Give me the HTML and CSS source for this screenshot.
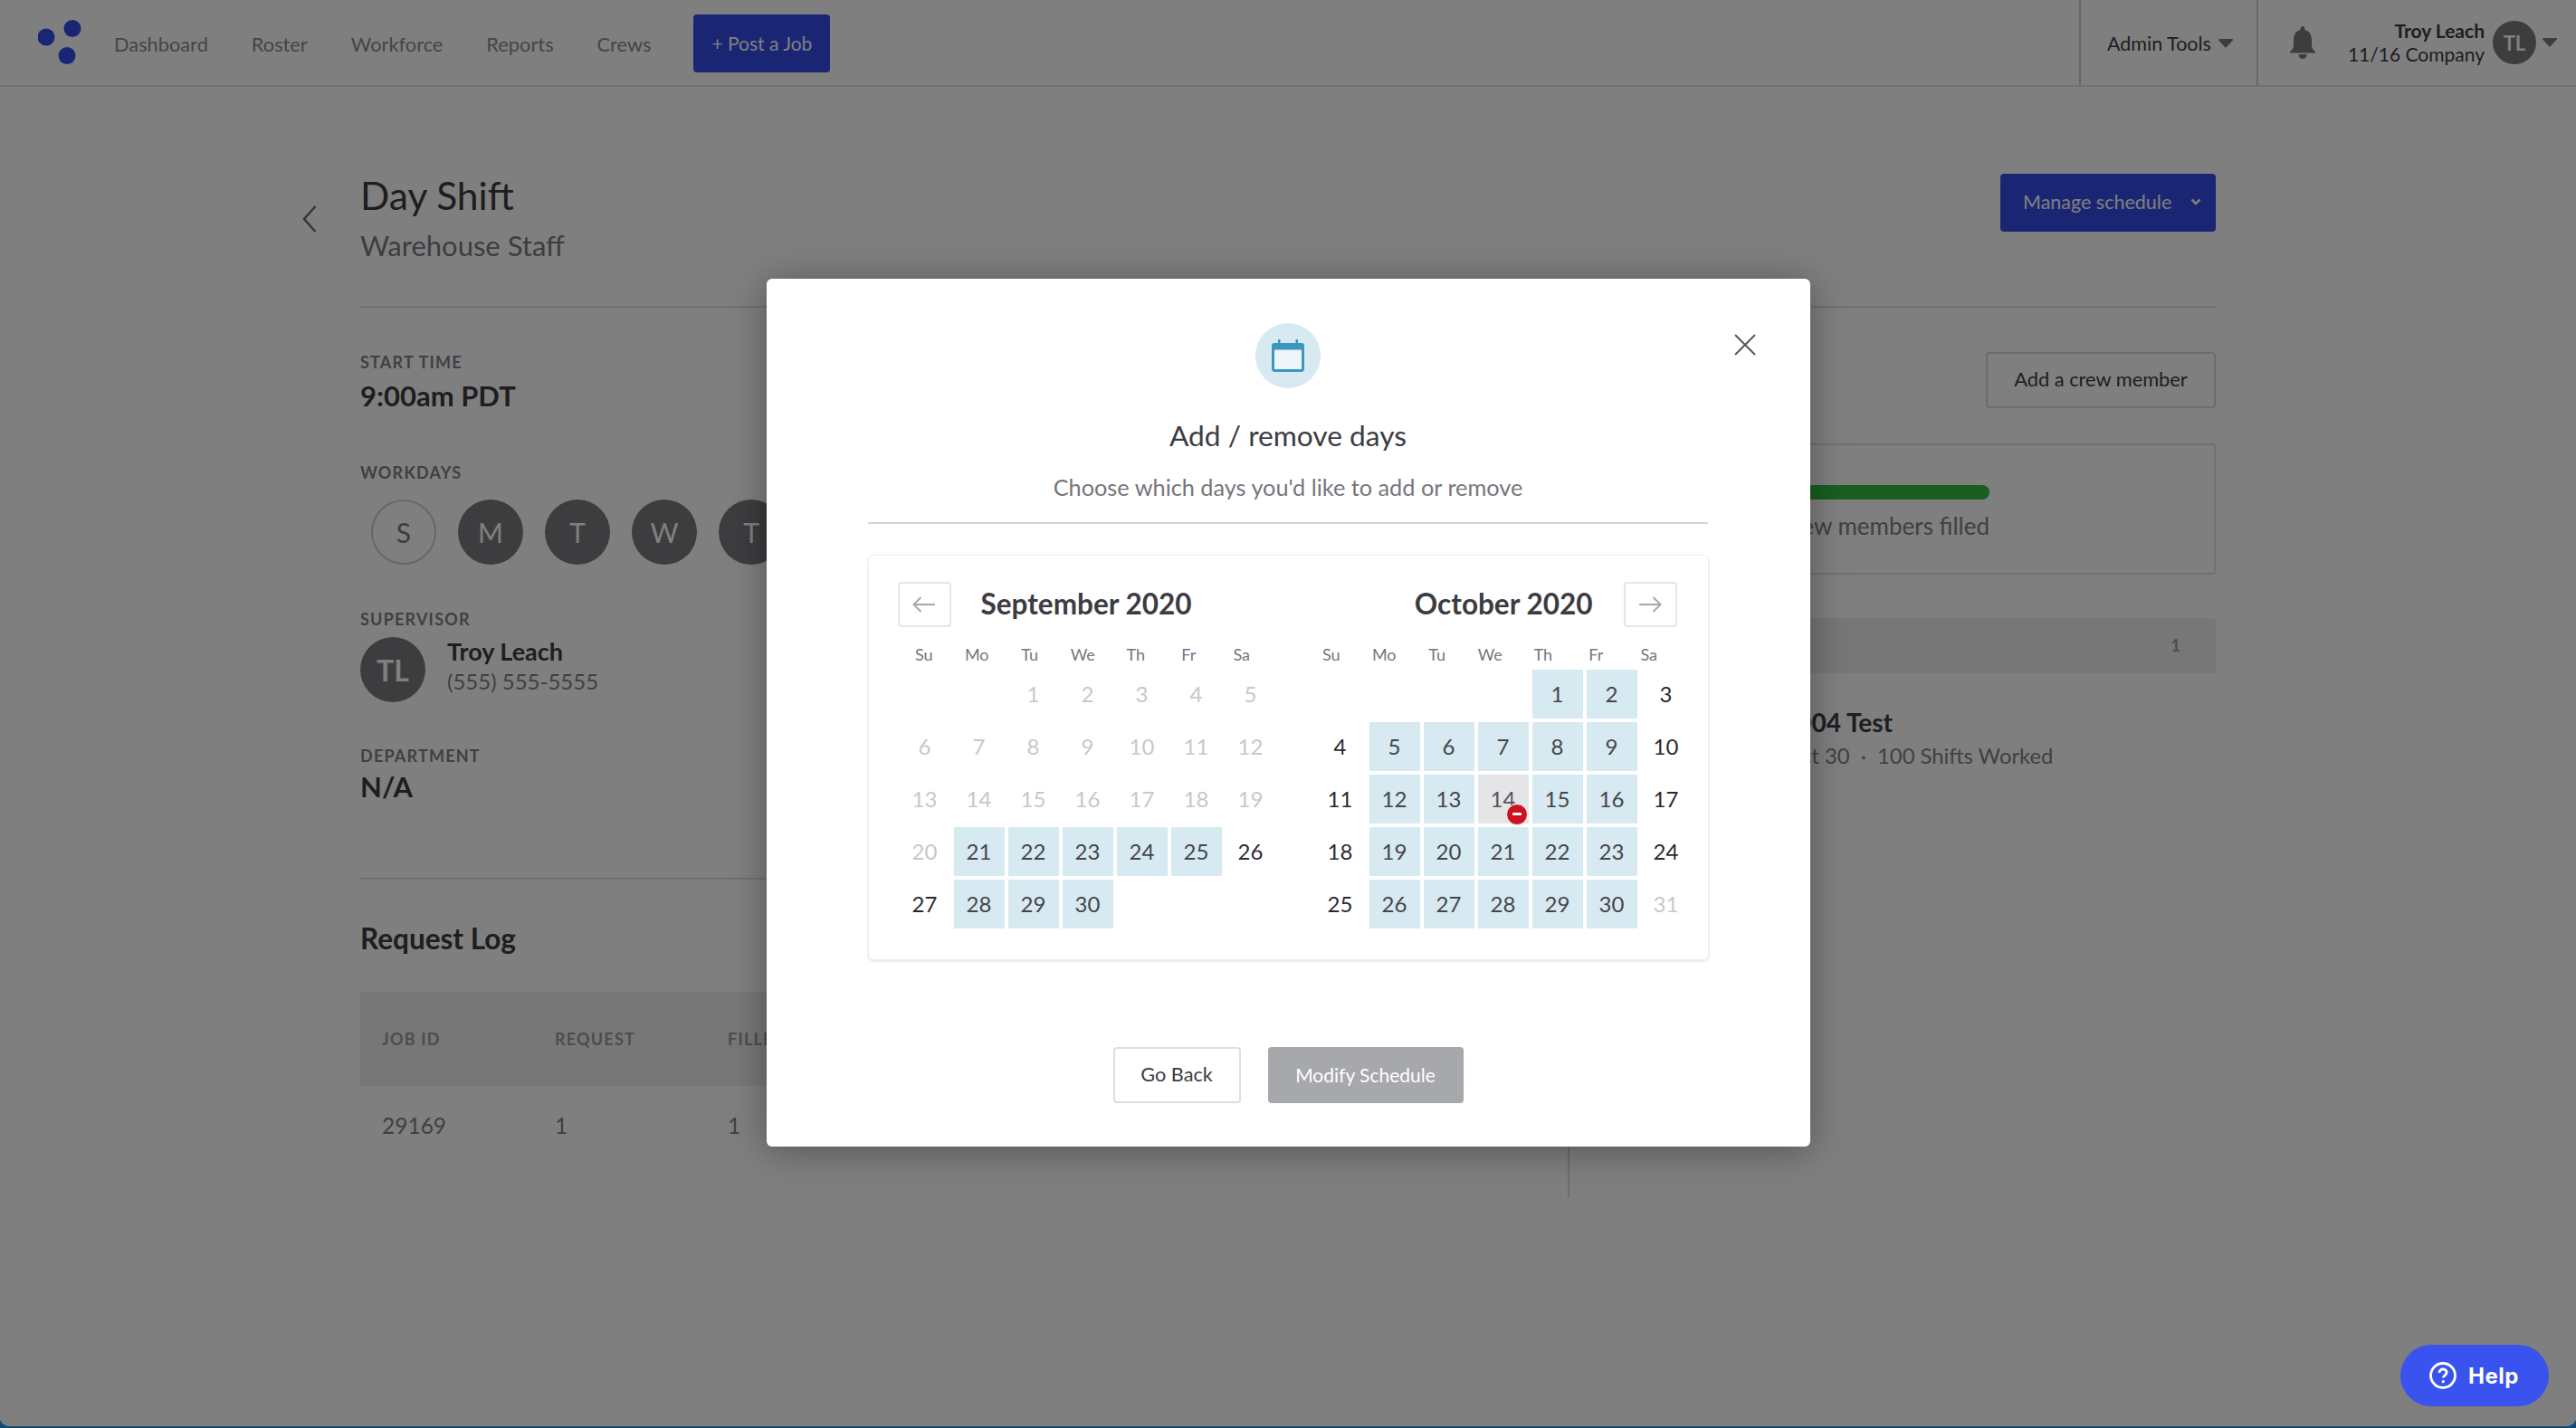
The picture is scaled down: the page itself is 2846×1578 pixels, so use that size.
FILE: index.html
```html
<!DOCTYPE html>
<html lang="en">

<head>
  <meta charset="UTF-8">
  <title>Day Shift</title>
  <link rel="stylesheet" href="styles.css">
</head>

<body>
  <div class="page">

    <header class="topbar">
      <svg class="logo" width="60" height="50" viewBox="0 0 60 50">
        <circle cx="9" cy="19" r="9.5" />
        <circle cx="38" cy="9.5" r="9.5" />
        <circle cx="32" cy="39.5" r="9.5" />
      </svg>
      <nav class="nav">
        <a>Dashboard</a>
        <a>Roster</a>
        <a>Workforce</a>
        <a>Reports</a>
        <a>Crews</a>
      </nav>
      <button class="btn-post">+ Post a Job</button>

      <div class="admin-tools">
        <span>Admin Tools</span>
        <svg class="caret" width="16" height="10" viewBox="0 0 16 10"><path d="M1 0h14a1 1 0 0 1 .7 1.7L8 10 .3 1.7A1 1 0 0 1 1 0z" /></svg>
      </div>

      <div class="account">
        <svg class="bell" width="28" height="36" viewBox="0 0 28 36">
          <path d="M14 0c1.400 0 2.300 1 2.300 2.400v1.500C21.500 5 24 9.400 24 15v6c0 3 1.500 5 4 7v1.500H0V28c2.500-2 4-4 4-7v-6C4 9.400 6.500 5 11.700 3.900V2.400C11.700 1 12.600 0 14 0z" />
          <path d="M9.500 31h9c0 3-2 5-4.500 5s-4.500-2-4.500-5z" />
        </svg>
        <div class="account-text">
          <div class="account-name">Troy Leach</div>
          <div class="account-company">11/16 Company</div>
        </div>
        <div class="avatar avatar-small">TL</div>
        <svg class="caret" width="16" height="10" viewBox="0 0 16 10"><path d="M1 0h14a1 1 0 0 1 .7 1.7L8 10 .3 1.7A1 1 0 0 1 1 0z" /></svg>
      </div>
    </header>

    <main class="main">
      <div class="back">
        <svg width="16" height="30" viewBox="0 0 16 30"><path d="M14.500 1 2 15l12.500 14" /></svg>
      </div>

      <div class="content">
        <div class="title-row">
          <div>
            <h1>Day Shift</h1>
            <div class="subtitle">Warehouse Staff</div>
          </div>
          <button class="btn-manage">
            Manage schedule
            <svg width="12" height="8" viewBox="0 0 12 8"><path d="M1.500 1.500 6 6l4.500-4.500" /></svg>
          </button>
        </div>

        <div class="columns">
          <section class="details">
            <div class="label">START TIME</div>
            <div class="value">9:00am PDT</div>

            <div class="label label-workdays">WORKDAYS</div>
            <div class="workdays">
              <div class="day-dot off">S</div>
              <div class="day-dot">M</div>
              <div class="day-dot">T</div>
              <div class="day-dot">W</div>
              <div class="day-dot">T</div>
            </div>

            <div class="label label-supervisor">SUPERVISOR</div>
            <div class="supervisor">
              <div class="avatar">TL</div>
              <div>
                <div class="supervisor-name">Troy Leach</div>
                <div class="supervisor-phone">(555) 555-5555</div>
              </div>
            </div>

            <div class="label label-department">DEPARTMENT</div>
            <div class="value value-department">N/A</div>

            <hr class="rule">

            <h2>Request Log</h2>
            <div class="log-table log-head">
              <div>JOB ID</div>
              <div>REQUEST</div>
              <div>FILLED</div>
            </div>
            <div class="log-table log-row">
              <div>29169</div>
              <div>1</div>
              <div>1</div>
            </div>
          </section>

          <section class="crew">
            <div class="crew-actions">
              <button class="btn-crew">Add a crew member</button>
            </div>
            <div class="crew-progress">
              <div class="bar"></div>
              <div class="bar-label">crew members filled</div>
            </div>
            <div class="crew-strip">1</div>
            <div class="crew-name">1004 Test</div>
            <div class="crew-meta">Oct 30 &nbsp;·&nbsp; 100 Shifts Worked</div>
          </section>
        </div>
      </div>
    </main>

    <button class="help">
      <svg width="30" height="30" viewBox="0 0 30 30">
        <circle cx="15" cy="15" r="13.500" />
        <path d="M11 12c0-2.400 1.800-4 4.100-4s4 1.500 4 3.600c0 3-3.700 3-3.700 5.900" />
        <circle class="help-dot" cx="15.300" cy="21.700" r="1.600" />
      </svg>
      Help
    </button>

    <div class="overlay">
      <div class="modal">
        <button class="close">
          <svg width="24" height="24" viewBox="0 0 24 24"><path d="M1 1l22 22M23 1 1 23" /></svg>
        </button>

        <div class="modal-icon">
          <svg width="36" height="36" viewBox="0 0 36 36">
            <path class="cal-fill" d="M0 7a3 3 0 0 1 3-3h4V0h2.500v4h17V0H29v4h4a3 3 0 0 1 3 3v6H0z" />
            <rect class="cal-line" x="1.500" y="10" width="33" height="24.500" rx="2" />
          </svg>
        </div>
        <div class="modal-title">Add / remove days</div>
        <div class="modal-sub">Choose which days you'd like to add or remove</div>
        <hr class="modal-rule">

        <div class="calendar">
          <div class="month">
            <div class="month-head">
              <button class="arrow">
                <svg width="26" height="18" viewBox="0 0 26 18"><path d="M25 9H1.500M9.500 1 1.500 9l8 8" /></svg>
              </button>
              <div class="month-name">September 2020</div>
            </div>
            <div class="weekdays">
              <span>Su</span><span>Mo</span><span>Tu</span><span>We</span><span>Th</span><span>Fr</span><span>Sa</span>
            </div>
            <div class="days">
              <div class="cell off start-3">1</div>
              <div class="cell off">2</div>
              <div class="cell off">3</div>
              <div class="cell off">4</div>
              <div class="cell off">5</div>
              <div class="cell off">6</div>
              <div class="cell off">7</div>
              <div class="cell off">8</div>
              <div class="cell off">9</div>
              <div class="cell off">10</div>
              <div class="cell off">11</div>
              <div class="cell off">12</div>
              <div class="cell off">13</div>
              <div class="cell off">14</div>
              <div class="cell off">15</div>
              <div class="cell off">16</div>
              <div class="cell off">17</div>
              <div class="cell off">18</div>
              <div class="cell off">19</div>
              <div class="cell off">20</div>
              <div class="cell on">21</div>
              <div class="cell on">22</div>
              <div class="cell on">23</div>
              <div class="cell on">24</div>
              <div class="cell on">25</div>
              <div class="cell">26</div>
              <div class="cell">27</div>
              <div class="cell on">28</div>
              <div class="cell on">29</div>
              <div class="cell on">30</div>
            </div>
          </div>

          <div class="month month-right">
            <div class="month-head">
              <div class="month-name">October 2020</div>
              <button class="arrow">
                <svg width="26" height="18" viewBox="0 0 26 18"><path d="M1 9h23.500M16.500 1l8 8-8 8" /></svg>
              </button>
            </div>
            <div class="weekdays">
              <span>Su</span><span>Mo</span><span>Tu</span><span>We</span><span>Th</span><span>Fr</span><span>Sa</span>
            </div>
            <div class="days">
              <div class="cell on start-5">1</div>
              <div class="cell on">2</div>
              <div class="cell">3</div>
              <div class="cell">4</div>
              <div class="cell on">5</div>
              <div class="cell on">6</div>
              <div class="cell on">7</div>
              <div class="cell on">8</div>
              <div class="cell on">9</div>
              <div class="cell">10</div>
              <div class="cell">11</div>
              <div class="cell on">12</div>
              <div class="cell on">13</div>
              <div class="cell removed">14
                <span class="minus"></span>
              </div>
              <div class="cell on">15</div>
              <div class="cell on">16</div>
              <div class="cell">17</div>
              <div class="cell">18</div>
              <div class="cell on">19</div>
              <div class="cell on">20</div>
              <div class="cell on">21</div>
              <div class="cell on">22</div>
              <div class="cell on">23</div>
              <div class="cell">24</div>
              <div class="cell">25</div>
              <div class="cell on">26</div>
              <div class="cell on">27</div>
              <div class="cell on">28</div>
              <div class="cell on">29</div>
              <div class="cell on">30</div>
              <div class="cell off">31</div>
            </div>
          </div>
        </div>

        <div class="modal-actions">
          <button class="btn-back">Go Back</button>
          <button class="btn-modify">Modify Schedule</button>
        </div>
      </div>
    </div>

  </div>
</body>

</html>
```

FILE: styles.css
```css
* {
  box-sizing: border-box;
}

html,
body {
  height: 100%;
}

body {
  margin: 0;
  overflow: hidden;
  background-color: #0e4c72;
  color: #3c3c42;
  font-family: Lato, "Noto Sans", sans-serif;
}

button {
  font-family: inherit;
  cursor: pointer;
}

.page {
  position: relative;
  height: 1576px;
  overflow: hidden;
  background-color: #fff;
  border-radius: 0 0 10px 10px;
}

/* top bar */
.topbar {
  display: flex;
  align-items: center;
  height: 96px;
  border-bottom: 2px solid #e2e2e2;
}

.logo {
  flex: none;
  margin: 0 0 0 42px;
  fill: #344ce8;
}

.nav {
  display: flex;
  gap: 48px;
  margin-left: 24px;
  padding-top: 2px;
  font-size: 21.800px;
  color: #8a8a8e;
}

.btn-post {
  width: 151px;
  height: 64px;
  margin: 2px 0 0 47px;
  padding: 0 0 2px;
  background-color: #344ce8;
  border: none;
  border-radius: 4px;
  color: #fff;
  font-size: 21px;
}

.admin-tools {
  display: flex;
  align-items: center;
  gap: 8px;
  width: 198px;
  height: 94px;
  margin-left: auto;
  padding: 2px 0 0 29px;
  border-left: 2px solid #d0d0d0;
  border-right: 2px solid #d0d0d0;
  font-size: 21.500px;
}

.caret {
  flex: none;
  fill: #7a7a80;
}

.account {
  display: flex;
  align-items: center;
  width: 351px;
  height: 94px;
  padding-left: 35px;
  padding-right: 21px;
}

.bell {
  flex: none;
  fill: #7a7a80;
}

.account-text {
  margin-left: auto;
  margin-right: 9px;
  text-align: right;
  font-size: 21px;
  line-height: 26px;
}

.account-name {
  font-weight: 700;
}

.avatar {
  display: flex;
  align-items: center;
  justify-content: center;
  flex: none;
  width: 72px;
  height: 72px;
  background-color: #7a7a80;
  border-radius: 50%;
  color: #fff;
  font-size: 32px;
  font-weight: 700;
}

.avatar-small {
  width: 48px;
  height: 48px;
  margin-right: 7px;
  font-size: 22px;
}

/* page body */
.main {
  display: flex;
  padding: 96px 0 0 334px;
}

.back {
  width: 64px;
  padding-top: 35px;
}

.back path {
  fill: none;
  stroke: #6a6a72;
  stroke-width: 2.500;
}

.content {
  width: 2050px;
}

.title-row {
  display: flex;
  justify-content: space-between;
  height: 148px;
  border-bottom: 2px solid #e0e0e0;
}

h1 {
  margin: -2px 0 0;
  font-size: 42.500px;
  font-weight: 400;
  line-height: 52px;
}

.subtitle {
  margin-top: 9px;
  font-size: 31px;
  line-height: 40px;
  color: #7a7a80;
}

.btn-manage {
  display: flex;
  align-items: center;
  justify-content: space-between;
  width: 238px;
  height: 64px;
  padding: 0 16px 3px 25px;
  background-color: #344ce8;
  border: none;
  border-radius: 4px;
  color: #fff;
  font-size: 21.500px;
}

.btn-manage path {
  fill: none;
  stroke: #fff;
  stroke-width: 2.500;
}

.columns {
  display: grid;
  grid-template-columns: 1336px 1fr;
}

.details {
  min-height: 983px;
  padding: 50px 48px 0 0;
  border-right: 2px solid #d8d8d8;
}

.label {
  font-size: 18px;
  font-weight: 700;
  line-height: 20px;
  letter-spacing: 1.200px;
  color: #808086;
}

.value {
  margin-top: 7px;
  font-size: 31px;
  font-weight: 700;
  line-height: 40px;
}

.label-workdays {
  margin-top: 55px;
}

.workdays {
  display: flex;
  gap: 24px;
  margin: 20px 0 0 12px;
}

.day-dot {
  display: flex;
  align-items: center;
  justify-content: center;
  width: 72px;
  height: 72px;
  background-color: #7a7a80;
  border-radius: 50%;
  color: #fff;
  font-size: 30px;
}

.day-dot.off {
  background-color: transparent;
  border: 2px solid #cfcfcf;
  color: #7a7a80;
}

.label-supervisor {
  margin-top: 50px;
}

.supervisor {
  display: flex;
  gap: 24px;
  margin-top: 10px;
}

.supervisor-name {
  margin-top: -1px;
  font-size: 27px;
  font-weight: 700;
  line-height: 34px;
}

.supervisor-phone {
  margin-top: 1px;
  font-size: 24px;
  line-height: 30px;
  color: #808086;
}

.label-department {
  margin-top: 49px;
}

.value-department {
  margin-top: 4px;
}

.rule {
  height: 2px;
  margin: 81px 0 0;
  background-color: #e0e0e0;
  border: none;
}

h2 {
  margin: 45px 0 0;
  font-size: 31.500px;
  font-weight: 700;
  line-height: 40px;
}

.log-table {
  display: grid;
  grid-template-columns: 191px 191px 1fr;
  align-items: center;
  padding-left: 24px;
}

.log-head {
  height: 104px;
  margin-top: 39px;
  background-color: #eeeeee;
  font-size: 18px;
  font-weight: 700;
  letter-spacing: 1.200px;
  color: #9a9aa0;
}

.log-row {
  height: 86px;
  font-size: 24.500px;
  color: #808086;
}

.crew {
  padding: 49px 0 0 48px;
}

.crew-actions {
  display: flex;
  justify-content: flex-end;
}

.btn-crew {
  width: 254px;
  height: 62px;
  padding: 0 0 3px;
  background-color: #fff;
  border: 2px solid #d8d8d8;
  border-radius: 4px;
  color: #3c3c42;
  font-size: 21.800px;
}

.crew-progress {
  height: 145px;
  margin-top: 39px;
  padding: 44px 0 0 32px;
  border: 2px solid #e0e0e0;
  border-radius: 4px;
}

.bar {
  width: 382px;
  height: 16px;
  background-color: #34bc40;
  border-radius: 8px;
}

.bar-label {
  width: 382px;
  margin-top: 12px;
  font-size: 26px;
  line-height: 34px;
  text-align: right;
  color: #808086;
}

.crew-strip {
  height: 61px;
  margin-top: 48px;
  padding-right: 39px;
  background-color: #eeeeee;
  border-radius: 4px;
  font-size: 18px;
  font-weight: 700;
  line-height: 61px;
  text-align: right;
  color: #9a9aa0;
}

.crew-name {
  margin: 36px 0 0 187px;
  font-size: 28px;
  font-weight: 700;
  line-height: 36px;
}

.crew-meta {
  margin: 2px 0 0 189px;
  font-size: 23.800px;
  line-height: 34px;
  color: #808086;
}

/* help pill stays above the dimmed layer */
.help {
  position: absolute;
  right: 30px;
  bottom: 22px;
  z-index: 3;
  display: flex;
  align-items: center;
  gap: 13px;
  width: 164px;
  height: 68px;
  padding: 0 0 0 32px;
  background-color: #3a53ee;
  border: none;
  border-radius: 34px;
  color: #fff;
  font-family: Inter, sans-serif;
  font-size: 24px;
  font-weight: 700;
  letter-spacing: 0.500px;
}

.help svg {
  fill: none;
  stroke: #fff;
  stroke-width: 2.800;
}

.help .help-dot {
  fill: #fff;
  stroke: none;
}

/* modal */
.overlay {
  position: absolute;
  inset: 0;
  z-index: 2;
  display: flex;
  justify-content: center;
  align-items: flex-start;
  padding-top: 308px;
  background-color: rgba(0, 0, 0, 0.5);
}

.modal {
  position: relative;
  display: flex;
  flex-direction: column;
  align-items: center;
  width: 1153px;
  height: 959px;
  padding-top: 49px;
  background-color: #fff;
  border-radius: 6px;
  box-shadow: 0 4px 40px rgba(0, 0, 0, 0.35);
}

.close {
  position: absolute;
  top: 61px;
  right: 60px;
  width: 24px;
  height: 24px;
  padding: 0;
  background: none;
  border: none;
}

.close path {
  fill: none;
  stroke: #55555b;
  stroke-width: 2;
}

.modal-icon {
  display: flex;
  align-items: center;
  justify-content: center;
  width: 72px;
  height: 72px;
  background-color: #d7e9f1;
  border-radius: 50%;
}

.cal-fill {
  fill: #3a98c0;
}

.cal-line {
  fill: #eef6fa;
  stroke: #3a98c0;
  stroke-width: 3;
}

.modal-title {
  margin-top: 30px;
  font-size: 31.700px;
  line-height: 44px;
}

.modal-sub {
  margin-top: 17px;
  font-size: 25.300px;
  line-height: 36px;
  color: #76767c;
}

.modal-rule {
  width: 928px;
  height: 2px;
  margin: 21px 0 0;
  background-color: #d4d4d4;
  border: none;
}

.calendar {
  display: flex;
  gap: 39px;
  width: 929px;
  height: 448px;
  margin-top: 34px;
  padding: 29px 0 0 32px;
  border: 1px solid #eeeeee;
  border-radius: 6px;
  box-shadow: 0 1px 3px rgba(0, 0, 0, 0.12);
}

.month {
  width: 420px;
}

.month-head {
  display: flex;
  align-items: center;
  gap: 33px;
  height: 50px;
}

.month-right .month-head {
  justify-content: flex-end;
  gap: 34px;
  padding-right: 18px;
}

.month-name {
  margin-top: -3px;
  font-size: 31.500px;
  font-weight: 700;
  line-height: 50px;
}

.arrow {
  display: flex;
  align-items: center;
  justify-content: center;
  width: 59px;
  height: 50px;
  padding: 0;
  background-color: #fff;
  border: 2px solid #e6e6e6;
  border-radius: 4px;
}

.arrow path {
  fill: none;
  stroke: #a8a8ac;
  stroke-width: 2;
}

.weekdays {
  display: grid;
  grid-template-columns: repeat(7, 58.500px);
  margin: 18px 0 3px 0;
  font-size: 18px;
  line-height: 24px;
  text-align: center;
  color: #76767c;
}

.month-right .weekdays {
  margin-left: -9px;
}

.days {
  display: grid;
  grid-template-columns: repeat(7, 60px);
  grid-auto-rows: 58px;
}

.cell {
  position: relative;
  display: flex;
  align-items: center;
  justify-content: center;
  padding-bottom: 2px;
  border: 2px solid #fff;
  font-size: 24px;
  color: #2a2a2e;
}

.cell.on {
  background-color: #d7e9f1;
  color: #45454b;
}

.cell.off {
  color: #c8c8c8;
}

.cell.removed {
  background-color: #e3e5e6;
  color: #55555b;
}

.start-3 {
  grid-column-start: 3;
}

.start-5 {
  grid-column-start: 5;
}

.minus {
  position: absolute;
  right: 1px;
  bottom: -2px;
  width: 24px;
  height: 24px;
  background-color: #cc1220;
  border: 1px solid #fff;
  border-radius: 50%;
}

.minus::after {
  content: "";
  position: absolute;
  top: 9px;
  left: 6px;
  width: 10px;
  height: 3px;
  background-color: #fff;
  border-radius: 1px;
}

.modal-actions {
  display: flex;
  gap: 30px;
  margin-top: 96px;
}

.btn-back {
  width: 141px;
  height: 62px;
  padding: 0 0 2px;
  background-color: #fff;
  border: 2px solid #dedede;
  border-radius: 4px;
  color: #3c3c42;
  font-size: 21.700px;
}

.btn-modify {
  width: 216px;
  height: 62px;
  padding: 0 0 2px;
  background-color: #a7a8ac;
  border: none;
  border-radius: 4px;
  color: #fff;
  font-size: 21px;
}
```
